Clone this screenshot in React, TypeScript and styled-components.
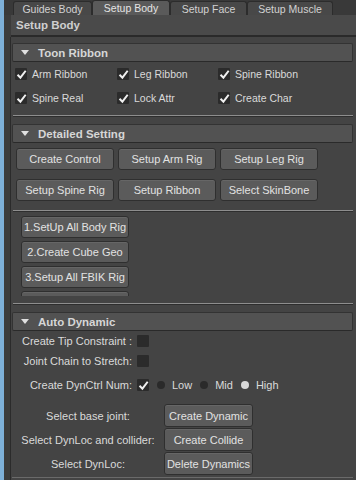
import React from 'react';
import styled, { createGlobalStyle } from 'styled-components';

const GlobalStyle = createGlobalStyle`
  body {
    margin: 0;
    background: #3c3c3c;
    font-family: 'Liberation Sans', Arial, sans-serif;
  }
`;

const Window = styled.div`
  width: 356px;
  height: 480px;
  display: flex;
  overflow: hidden;
  background: #3c3c3c;
  color: #dcdcdc;
`;

const BlueStrip = styled.div`
  width: 4px;
  background: #7eb0d8;
`;

const Main = styled.div`
  flex: 1;
  display: flex;
  flex-direction: column;
  min-width: 0;
`;

// tabs
const TabBar = styled.div`
  height: 15px;
  display: flex;
  align-items: flex-end;
  padding-left: 9px;
  background: #393939;
`;

const Tab = styled.div<{ $w: number; $active?: boolean }>`
  width: ${p => p.$w}px;
  height: ${p => (p.$active ? 15 : 14)}px;
  box-sizing: border-box;
  display: flex;
  align-items: center;
  justify-content: center;
  font-size: 10.5px;
  color: ${p => (p.$active ? '#e4e4e4' : '#d2d2d2')};
  background: ${p => (p.$active ? '#5a5a5a' : '#484848')};
  border: 1px solid #2c2c2c;
  border-bottom: none;
  border-radius: 3px 3px 0 0;
`;

const TitleBar = styled.div`
  height: 20px;
  margin-left: 7px;
  padding-left: 5px;
  display: flex;
  align-items: center;
  background: #4a4a4a;
  border-bottom: 2px solid #2a2a2a;
  font-size: 11.5px;
  font-weight: bold;
  color: #cfcfcf;
`;

const Body = styled.div`
  flex: 1;
  margin-left: 6px;
  border-left: 1px solid #2b2b2b;
  background: #444444;
  padding: 6px 3px 0 1px;
  display: flex;
  flex-direction: column;
`;

// frame sections
const FrameHeader = styled.div`
  height: 19px;
  box-sizing: border-box;
  display: flex;
  align-items: center;
  gap: 9px;
  padding-left: 8px;
  background: #525252;
  border: 1px solid #333333;
  border-bottom-color: #2a2a2a;
  border-radius: 2px;
  font-size: 11.5px;
  font-weight: bold;
  color: #d6d6d6;
`;

const Arrow = styled.span`
  width: 0;
  height: 0;
  border-left: 4px solid transparent;
  border-right: 4px solid transparent;
  border-top: 5px solid #e0e0e0;
`;

const Separator = styled.div<{ $top: number; $bottom: number }>`
  height: 1px;
  margin: ${p => p.$top}px 0 ${p => p.$bottom}px 1px;
  background: #8e8e8e;
  box-shadow: 0 1px 0 #2e2e2e;
`;

const CheckGrid = styled.div`
  display: grid;
  grid-template-columns: 102px 101px 1fr;
  grid-auto-rows: 24px;
  padding-left: 3px;
`;

const CheckItem = styled.label`
  display: flex;
  align-items: center;
  gap: 5px;
  font-size: 10.5px;
  color: #dadada;
`;

const Box = styled.span`
  width: 12px;
  height: 12px;
  display: flex;
  align-items: center;
  justify-content: center;
  background: #2b2b2b;
  border-radius: 1px;
  flex-shrink: 0;
`;

const Check = ({ on = true }: { on?: boolean }) => (
  <Box>
    {on && (
      <svg width="11" height="11" viewBox="0 0 10 10">
        <polyline points="1.4,5.2 4,7.9 8.8,1.6" fill="none" stroke="#f0f0f0" strokeWidth="1.8" />
      </svg>
    )}
  </Box>
);

const ButtonGrid = styled.div`
  display: grid;
  grid-template-columns: repeat(3, 98px);
  column-gap: 4px;
  row-gap: 9px;
  padding: 5px 0 0 4px;
`;

const Button = styled.div<{ $h?: number }>`
  height: ${p => p.$h || 22}px;
  box-sizing: border-box;
  flex-shrink: 0;
  display: flex;
  align-items: center;
  justify-content: center;
  background: #5b5b5b;
  border: 1px solid #2f2f2f;
  border-radius: 3px;
  box-shadow: inset 0 1px 0 #666;
  font-size: 11px;
  color: #e2e2e2;
  white-space: nowrap;
`;

const ScrollArea = styled.div`
  height: 80px;
  overflow: hidden;
  padding: 5px 0 0 9px;
  display: flex;
  flex-direction: column;
  gap: 3px;
  width: 108px;
`;

const FormGrid = styled.div`
  display: grid;
  grid-template-columns: 120px 1fr;
  column-gap: 5px;
  align-items: center;
`;

const FormLabel = styled.div<{ $h: number; $mt?: number }>`
  height: ${p => p.$h}px;
  margin-top: ${p => p.$mt || 0}px;
  display: flex;
  align-items: center;
  justify-content: flex-end;
  font-size: 11px;
  color: #dadada;
  white-space: nowrap;
`;

const FormControl = styled.div<{ $h: number; $mt?: number }>`
  height: ${p => p.$h}px;
  margin-top: ${p => p.$mt || 0}px;
  display: flex;
  align-items: center;
  gap: 8px;
  font-size: 11px;
  color: #dadada;
`;

const Radio = styled.span<{ $on?: boolean }>`
  display: flex;
  align-items: center;
  gap: 7px;
  &::before {
    content: '';
    width: 8px;
    height: 8px;
    border-radius: 50%;
    background: ${p => (p.$on ? '#d8d8d8' : '#2a2a2a')};
  }
`;

const ActionGrid = styled.div`
  display: grid;
  grid-template-columns: 136px 89px;
  column-gap: 8px;
  row-gap: 1px;
  padding: 9px 0 0 8px;
`;

const ActionLabel = styled.div`
  display: flex;
  align-items: center;
  justify-content: center;
  font-size: 11px;
  color: #dadada;
  white-space: nowrap;
`;

const BottomLine = styled.div`
  height: 1px;
  margin-top: 2px;
  background: #6a6a6a;
`;

const toon = ['Arm Ribbon', 'Leg Ribbon', 'Spine Ribbon', 'Spine Real', 'Lock Attr', 'Create Char'];
const detailed = ['Create Control', 'Setup Arm Rig', 'Setup Leg Rig', 'Setup Spine Rig', 'Setup Ribbon', 'Select SkinBone'];
// the fourth step button is scrolled out of view, only its top edge shows
const steps = ['1.SetUp All Body Rig', '2.Create Cube Geo', '3.Setup All FBIK Rig', ''];
const actions = [
  ['Select base joint:', 'Create Dynamic'],
  ['Select DynLoc and collider:', 'Create Collide'],
  ['Select DynLoc:', 'Delete Dynamics'],
];

export default function App() {
  return (
    <>
      <GlobalStyle />
      <Window>
        <BlueStrip />
        <Main>
          <TabBar>
            <Tab $w={79}>Guides Body</Tab>
            <Tab $w={78} $active>Setup Body</Tab>
            <Tab $w={77}>Setup Face</Tab>
            <Tab $w={86}>Setup Muscle</Tab>
          </TabBar>
          <TitleBar>Setup Body</TitleBar>
          <Body>
            <FrameHeader>
              <Arrow />
              Toon Ribbon
            </FrameHeader>
            <CheckGrid>
              {toon.map(t => (
                <CheckItem key={t}>
                  <Check />
                  {t}
                </CheckItem>
              ))}
            </CheckGrid>
            <Separator $top={5} $bottom={8} />

            <FrameHeader>
              <Arrow />
              Detailed Setting
            </FrameHeader>
            <ButtonGrid>
              {detailed.map(t => (
                <Button key={t}>{t}</Button>
              ))}
            </ButtonGrid>
            <Separator $top={9} $bottom={0} />

            <ScrollArea>
              {steps.map((t, i) => (
                <Button key={i}>{t}</Button>
              ))}
            </ScrollArea>
            <Separator $top={7} $bottom={8} />

            <FrameHeader>
              <Arrow />
              Auto Dynamic
            </FrameHeader>
            <FormGrid>
              <FormLabel $h={20}>Create Tip Constraint :</FormLabel>
              <FormControl $h={20}>
                <Check on={false} />
              </FormControl>
              <FormLabel $h={20}>Joint Chain to Stretch:</FormLabel>
              <FormControl $h={20}>
                <Check on={false} />
              </FormControl>
              <FormLabel $h={20} $mt={4}>Create DynCtrl Num:</FormLabel>
              <FormControl $h={20} $mt={4}>
                <Check />
                <Radio>Low</Radio>
                <Radio>Mid</Radio>
                <Radio $on>High</Radio>
              </FormControl>
            </FormGrid>
            <ActionGrid>
              {actions.map(([l, b]) => (
                <React.Fragment key={b}>
                  <ActionLabel>{l}</ActionLabel>
                  <Button $h={23}>{b}</Button>
                </React.Fragment>
              ))}
            </ActionGrid>
            <BottomLine />
          </Body>
        </Main>
      </Window>
    </>
  );
}
